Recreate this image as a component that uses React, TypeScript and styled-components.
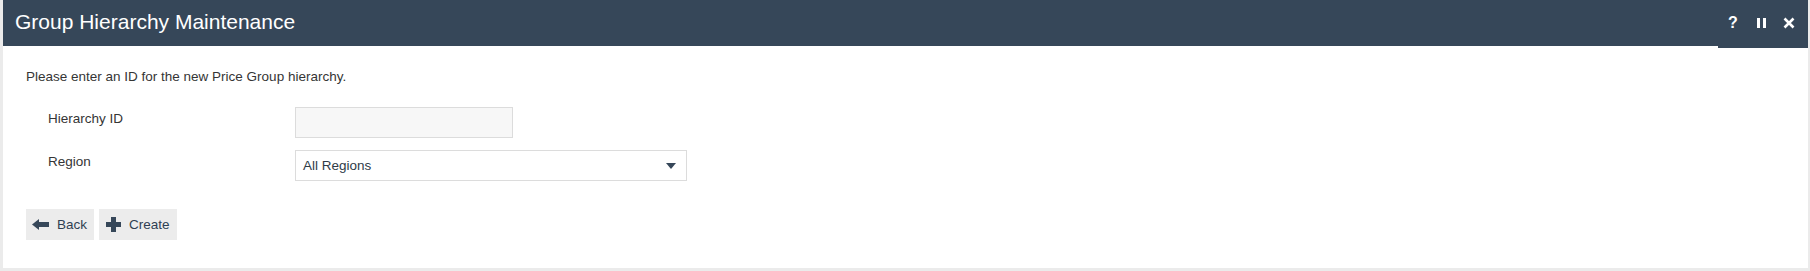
import styled, { createGlobalStyle } from "styled-components";

const GlobalStyle = createGlobalStyle`
  html, body {
    margin: 0;
    padding: 0;
    background: #ebebeb;
    font-family: "Liberation Sans", Arial, sans-serif;
  }
`;

const Page = styled.div`
  padding: 0 2px 3px 3px;
  width: 1810px;
  box-sizing: border-box;
`;

const Card = styled.div`
  background: #fff;
  height: 268px;
  display: flex;
  flex-direction: column;
`;

const Header = styled.div`
  height: 46px;
  background: #364759;
  display: flex;
  align-items: flex-start;
  justify-content: space-between;
`;

const Title = styled.h1`
  margin: 0;
  padding: 10px 0 0 12px;
  font-size: 21px;
  font-weight: 400;
  color: #fff;
  line-height: 24px;
`;

const Tools = styled.div`
  height: 48px;
  width: 90px;
  background: #364759;
  display: flex;
  align-items: center;
  justify-content: flex-end;
  padding-right: 5px;
  box-sizing: border-box;
  margin-bottom: -2px;
  position: relative;
  z-index: 1;
`;

const ToolButton = styled.span`
  width: 28px;
  height: 24px;
  display: flex;
  align-items: center;
  justify-content: center;
  color: #fff;
  font-weight: 700;
  font-size: 16px;
  margin-top: -2px;
`;

const Body = styled.div`
  padding: 22px 23px 0 23px;
  color: #353535;
  font-size: 13.5px;
`;

const Intro = styled.p`
  margin: 0;
  line-height: 18px;
`;

const Form = styled.div`
  display: grid;
  grid-template-columns: 247px auto;
  row-gap: 12px;
  margin: 21px 0 0 22px;
  align-items: center;
`;

const Label = styled.label`
  line-height: 18px;
  margin-top: -8px;
`;

const TextInput = styled.input`
  width: 218px;
  height: 31px;
  box-sizing: border-box;
  border: 1px solid #dcdcdc;
  background: #f7f7f7;
  font: inherit;
  outline: none;
`;

const Select = styled.div`
  width: 392px;
  height: 31px;
  box-sizing: border-box;
  border: 1px solid #dcdcdc;
  background: #fff;
  display: flex;
  align-items: center;
  justify-content: space-between;
  padding: 0 10px 0 7px;
  color: #2f3b48;
`;

const Actions = styled.div`
  display: flex;
  gap: 5px;
  margin-top: 28px;
`;

const Button = styled.button<{ $pl: number }>`
  height: 31px;
  border: none;
  background: #ececec;
  display: flex;
  align-items: center;
  gap: 8px;
  padding: 0 7px 0 ${(p) => p.$pl}px;
  font: inherit;
  font-size: 13.5px;
  color: #2f3f52;
  cursor: pointer;
`;

const ArrowLeft = () => (
  <svg width="17" height="11" viewBox="0 0 17 11">
    <polygon points="0,5.5 7,0 7,11" fill="#364759" />
    <rect x="6" y="3" width="11" height="5" fill="#364759" />
  </svg>
);

const Plus = () => (
  <svg width="15" height="15" viewBox="0 0 15 15">
    <rect x="5" y="0" width="5" height="15" fill="#364759" />
    <rect x="0" y="5" width="15" height="5" fill="#364759" />
  </svg>
);

const Caret = () => (
  <svg width="10" height="6" viewBox="0 0 10 6">
    <polygon points="0,0 10,0 5,6" fill="#364759" />
  </svg>
);

const Pause = () => (
  <svg width="9" height="10" viewBox="0 0 9 10">
    <rect x="0" y="0" width="3" height="10" fill="#fff" />
    <rect x="6" y="0" width="3" height="10" fill="#fff" />
  </svg>
);

const Close = () => (
  <svg width="12" height="12" viewBox="0 0 12 12">
    <path d="M1.5 1.5 L10.5 10.5 M10.5 1.5 L1.5 10.5" stroke="#fff" strokeWidth="2.6" />
  </svg>
);

export default function App() {
  return (
    <>
      <GlobalStyle />
      <Page>
        <Card>
          <Header>
            <Title>Group Hierarchy Maintenance</Title>
            <Tools>
              <ToolButton>?</ToolButton>
              <ToolButton>
                <Pause />
              </ToolButton>
              <ToolButton>
                <Close />
              </ToolButton>
            </Tools>
          </Header>
          <Body>
            <Intro>Please enter an ID for the new Price Group hierarchy.</Intro>
            <Form>
              <Label>Hierarchy ID</Label>
              <TextInput />
              <Label>Region</Label>
              <Select>
                <span>All Regions</span>
                <Caret />
              </Select>
            </Form>
            <Actions>
              <Button $pl={6}>
                <ArrowLeft />
                Back
              </Button>
              <Button $pl={7}>
                <Plus />
                Create
              </Button>
            </Actions>
          </Body>
        </Card>
      </Page>
    </>
  );
}
